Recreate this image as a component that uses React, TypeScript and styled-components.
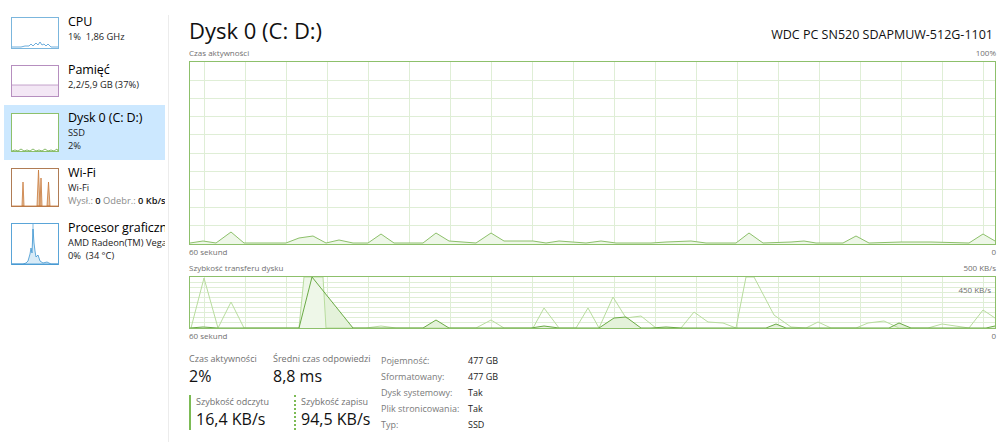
import { Fragment } from "react";
import styled, { createGlobalStyle } from "styled-components";

const GlobalStyle = createGlobalStyle`
  html, body {
    margin: 0;
    padding: 0;
    background: #ffffff;
  }
  body {
    font-family: "Open Sans", "Noto Sans", sans-serif;
    color: #000;
  }
`;

const GREEN = "#8dc06b";
const GRID = "#dfeed6";
const FILL = "#eef7e8";

type Pt = [number, number];

const Window = styled.div`
  display: flex;
  width: 1000px;
  height: 442px;
  overflow: hidden;
`;

/* ---------- left list of devices ---------- */

const Sidebar = styled.nav`
  width: 168px;
  flex-shrink: 0;
  padding-top: 9px;
  display: flex;
  flex-direction: column;
`;

const Item = styled.div<{ $active?: boolean }>`
  display: flex;
  gap: 9px;
  margin: 0 3px 0 4px;
  padding: 8px 0 8px 7px;
  background: ${(p) => (p.$active ? "#cce8ff" : "transparent")};
  overflow: hidden;
  white-space: nowrap;
`;

const Thumb = styled.svg<{ $h: number }>`
  flex-shrink: 0;
  width: 48px;
  height: ${(p) => p.$h}px;
  display: block;
`;

const ItemText = styled.div`
  display: flex;
  flex-direction: column;
  margin-top: -3px;
`;

const ItemTitle = styled.div`
  font-size: 12.5px;
  line-height: 16px;
  letter-spacing: -0.1px;
  color: #000;
`;

const ItemSub = styled.div`
  font-size: 9.3px;
  line-height: 13px;
  color: #222;
`;

const Dim = styled.span`
  color: #8a8a8a;
`;

const Strong = styled.span`
  color: #111;
  font-weight: 600;
`;

/* ---------- main panel ---------- */

const Main = styled.main`
  flex: 1;
  margin-top: 15px;
  border-left: 1px solid #ececec;
  padding: 0 4px 0 20px;
  display: flex;
  flex-direction: column;
  min-width: 0;
`;

const Header = styled.header`
  display: flex;
  justify-content: space-between;
  align-items: baseline;
  margin-top: 2px;
`;

const Title = styled.h1`
  margin: 0;
  font-size: 22px;
  line-height: 26px;
  font-weight: 400;
  color: #111;
`;

const Model = styled.div`
  font-size: 12.5px;
  color: #111;
  margin-right: 3px;
`;

const AxisRow = styled.div<{ $top: number }>`
  display: flex;
  justify-content: space-between;
  font-size: 8px;
  line-height: 12px;
  color: #707070;
  margin-top: ${(p) => p.$top}px;
`;

const ChartBox = styled.div<{ $h: number; $top: number }>`
  position: relative;
  height: ${(p) => p.$h}px;
  margin-top: ${(p) => p.$top}px;
  border: 1px solid ${GREEN};
  box-sizing: border-box;
`;

const ChartSvg = styled.svg`
  display: block;
  width: 100%;
  height: 100%;
`;

const InnerTag = styled.span`
  position: absolute;
  right: 4px;
  top: 7px;
  font-size: 8px;
  color: #707070;
`;

/* ---------- stats ---------- */

const Stats = styled.section`
  display: flex;
  margin-top: 10px;
  white-space: nowrap;
`;

const Perf = styled.div`
  width: 192px;
  display: flex;
  flex-direction: column;
  gap: 8px;
`;

const PerfRow = styled.div`
  display: flex;
`;

const Stat = styled.div<{ $w?: number; $bar?: "solid" | "dotted" }>`
  width: ${(p) => (p.$w ? `${p.$w}px` : "auto")};
  display: flex;
  flex-direction: column;
  padding-left: ${(p) => (p.$bar ? "5px" : "0")};
  border-left: ${(p) => (p.$bar ? `2px ${p.$bar} #7cbb55` : "none")};
`;

const StatLabel = styled.div`
  font-size: 9px;
  line-height: 13px;
  color: #707070;
`;

const StatValue = styled.div`
  font-size: 16px;
  line-height: 22px;
  color: #111;
`;

const Props = styled.div`
  display: grid;
  grid-template-columns: 87px auto;
  grid-auto-rows: 16px;
  align-items: center;
  font-size: 9px;
`;

const PropKey = styled.div`
  color: #7a7a7a;
`;

const PropVal = styled.div`
  color: #222;
`;

/* ---------- drawing helpers ---------- */

const pts = (list: Pt[]) => list.map(([x, y]) => `${x},${y}`).join(" ");

const area = (list: Pt[], bottom: number) =>
  pts([[list[0][0], bottom], ...list, [list[list.length - 1][0], bottom]]);

function Grid({ w, h, rows }: { w: number; h: number; rows: number }) {
  const cols: number[] = [];
  for (let x = 14; x < w; x += 41) cols.push(x);
  const lines: number[] = [];
  for (let i = 1; i < rows; i++) lines.push((h / rows) * i);
  return (
    <g stroke={GRID} strokeWidth={1} shapeRendering="crispEdges">
      {cols.map((x) => (
        <line key={`c${x}`} x1={x} y1={0} x2={x} y2={h} />
      ))}
      {lines.map((y) => (
        <line key={`r${y}`} x1={0} y1={y} x2={w} y2={y} />
      ))}
    </g>
  );
}

const activity: Pt[] = [
  [0, 181], [13, 179], [26, 181], [41, 170], [54, 181], [96, 181], [109, 176],
  [123, 174], [136, 181], [149, 178], [163, 181], [178, 181], [191, 172],
  [204, 181], [233, 181], [246, 171], [259, 179], [286, 181], [301, 171],
  [314, 179], [343, 179], [356, 181], [369, 179], [396, 181], [411, 179],
  [426, 181], [461, 181], [476, 180], [501, 179], [516, 181], [546, 181],
  [559, 171], [573, 181], [601, 180], [614, 179], [626, 181], [653, 181],
  [666, 174], [679, 181], [711, 180], [741, 180], [779, 181], [793, 172],
  [805, 179],
];

const readRate: Pt[] = [
  [0, 51], [13, 50], [28, 51], [109, 51], [122, 0], [163, 51], [233, 51],
  [246, 43], [259, 51], [341, 51], [354, 49], [369, 51], [409, 51], [424, 41],
  [436, 40], [451, 51], [461, 51], [476, 50], [491, 51], [576, 51], [586, 47],
  [596, 51], [699, 51], [709, 46], [721, 51], [796, 51], [805, 49],
];

const writeRate: Pt[] = [
  [1, 51], [14, 1], [28, 51], [41, 25], [54, 51], [109, 51], [114, 0],
  [133, 0], [136, 51], [176, 51], [191, 49], [206, 51], [286, 51], [301, 43],
  [314, 51], [343, 51], [354, 31], [369, 51], [386, 51], [398, 31], [409, 51],
  [423, 20], [436, 41], [451, 39], [466, 51], [491, 51], [504, 35], [518, 45],
  [533, 46], [546, 51], [556, 0], [564, 0], [584, 38], [601, 50], [616, 51],
  [628, 45], [641, 51], [666, 51], [678, 46], [694, 44], [709, 51], [738, 51],
  [752, 47], [779, 51], [793, 33], [805, 41],
];

function ActivityChart() {
  const w = 805;
  const h = 182;
  return (
    <ChartSvg viewBox={`0 0 ${w} ${h}`} preserveAspectRatio="none">
      <Grid w={w} h={h} rows={10} />
      <polygon points={area(activity, h)} fill={FILL} />
      <polyline points={pts(activity)} fill="none" stroke="#8dc06b" strokeWidth={1} />
    </ChartSvg>
  );
}

function TransferChart() {
  const w = 805;
  const h = 51;
  return (
    <ChartSvg viewBox={`0 0 ${w} ${h}`} preserveAspectRatio="none">
      <Grid w={w} h={h} rows={10} />
      <polygon points={area(readRate, h)} fill="#e4f2da" />
      <polygon points={pts([[109, 51], [114, 0], [133, 0], [136, 51]])} fill="#eef7e8" />
      <polyline points={pts(writeRate)} fill="none" stroke="#b8dc9e" strokeWidth={1} />
      <polyline points={pts(readRate)} fill="none" stroke="#6aaa45" strokeWidth={1} />
    </ChartSvg>
  );
}

/* ---------- sidebar thumbnails ---------- */

function CpuThumb() {
  return (
    <Thumb $h={32} viewBox="0 0 48 32">
      <rect x={0.5} y={0.5} width={47} height={31} fill="#fff" stroke="#7bb6dd" />
      <polyline
        points="1,30 10,30 14,29 18,29 20,27 22,29 25,26 27,28 29,25 31,28 33,27 35,29 37,27 40,30 47,30"
        fill="none"
        stroke="#4a9bd4"
        strokeWidth={0.8}
      />
    </Thumb>
  );
}

function MemThumb() {
  return (
    <Thumb $h={32} viewBox="0 0 48 32">
      <rect x={0.5} y={0.5} width={47} height={31} fill="#fff" stroke="#b68fbf" />
      <rect x={1} y={20} width={46} height={11} fill="#f3e7f5" />
      <line x1={1} y1={20} x2={47} y2={20} stroke="#b68fbf" strokeWidth={0.8} />
    </Thumb>
  );
}

function DiskThumb() {
  return (
    <Thumb $h={39} viewBox="0 0 48 39">
      <rect x={0.5} y={0.5} width={47} height={38} fill="#fff" stroke="#8dc06b" />
      <polyline
        points="1,38 4,37 7,38 10,36 13,38 16,37 19,38 22,36 25,38 28,37 31,38 34,36 37,38 40,37 43,38 46,36 47,38"
        fill="none"
        stroke="#6aaa45"
        strokeWidth={0.8}
      />
    </Thumb>
  );
}

function WifiThumb() {
  return (
    <Thumb $h={39} viewBox="0 0 48 39">
      <rect x={0.5} y={0.5} width={47} height={38} fill="#fff" stroke="#b07c55" />
      <g fill="#e8c6a6" stroke="#c8783a" strokeWidth={0.8}>
        <polygon points="11,38 12,14 13,38" />
        <polygon points="26,38 27.5,2 29,38" />
        <polygon points="29,38 30,10 31,38" />
        <polygon points="36,38 37.5,14 39,38" />
      </g>
      <line x1={1} y1={38} x2={47} y2={38} stroke="#c8783a" strokeWidth={0.8} />
    </Thumb>
  );
}

function GpuThumb() {
  return (
    <Thumb $h={42} viewBox="0 0 48 42">
      <rect x={0.5} y={0.5} width={47} height={41} fill="#fff" stroke="#5aa5d8" />
      <line x1={22} y1={1} x2={22} y2={41} stroke="#5aa5d8" strokeWidth={0.8} />
      <polygon
        points="1,41 12,41 15,40 17,38 19,31 20,25 21,30 22,6 23,20 24,28 25,34 27,32 29,38 32,40 36,39 40,41 47,41"
        fill="#d8ebf7"
        stroke="#3f95d0"
        strokeWidth={0.8}
      />
    </Thumb>
  );
}

const properties: [string, string][] = [
  ["Pojemność:", "477 GB"],
  ["Sformatowany:", "477 GB"],
  ["Dysk systemowy:", "Tak"],
  ["Plik stronicowania:", "Tak"],
  ["Typ:", "SSD"],
];

export default function App() {
  return (
    <>
      <GlobalStyle />
      <Window>
        <Sidebar>
          <Item>
            <CpuThumb />
            <ItemText>
              <ItemTitle>CPU</ItemTitle>
              <ItemSub>1%&nbsp; 1,86 GHz</ItemSub>
            </ItemText>
          </Item>
          <Item>
            <MemThumb />
            <ItemText>
              <ItemTitle>Pamięć</ItemTitle>
              <ItemSub>2,2/5,9 GB (37%)</ItemSub>
            </ItemText>
          </Item>
          <Item $active>
            <DiskThumb />
            <ItemText>
              <ItemTitle>Dysk 0 (C: D:)</ItemTitle>
              <ItemSub>SSD</ItemSub>
              <ItemSub>2%</ItemSub>
            </ItemText>
          </Item>
          <Item>
            <WifiThumb />
            <ItemText>
              <ItemTitle>Wi-Fi</ItemTitle>
              <ItemSub>Wi-Fi</ItemSub>
              <ItemSub>
                <Dim>Wysł.:</Dim> <Strong>0</Strong> <Dim>Odebr.:</Dim> <Strong>0 Kb/s</Strong>
              </ItemSub>
            </ItemText>
          </Item>
          <Item>
            <GpuThumb />
            <ItemText>
              <ItemTitle>Procesor graficzny</ItemTitle>
              <ItemSub>AMD Radeon(TM) Vega</ItemSub>
              <ItemSub>0%&nbsp; (34 °C)</ItemSub>
            </ItemText>
          </Item>
        </Sidebar>

        <Main>
          <Header>
            <Title>Dysk 0 (C: D:)</Title>
            <Model>WDC PC SN520 SDAPMUW-512G-1101</Model>
          </Header>

          <AxisRow $top={4}>
            <span>Czas aktywności</span>
            <span>100%</span>
          </AxisRow>
          <ChartBox $h={184} $top={2}>
            <ActivityChart />
          </ChartBox>
          <AxisRow $top={1}>
            <span>60 sekund</span>
            <span>0</span>
          </AxisRow>

          <AxisRow $top={4}>
            <span>Szybkość transferu dysku</span>
            <span>500 KB/s</span>
          </AxisRow>
          <ChartBox $h={53} $top={2}>
            <TransferChart />
            <InnerTag>450 KB/s</InnerTag>
          </ChartBox>
          <AxisRow $top={1}>
            <span>60 sekund</span>
            <span>0</span>
          </AxisRow>

          <Stats>
            <Perf>
              <PerfRow>
                <Stat $w={84}>
                  <StatLabel>Czas aktywności</StatLabel>
                  <StatValue>2%</StatValue>
                </Stat>
                <Stat>
                  <StatLabel>Średni czas odpowiedzi</StatLabel>
                  <StatValue>8,8 ms</StatValue>
                </Stat>
              </PerfRow>
              <PerfRow>
                <Stat $w={98} $bar="solid">
                  <StatLabel>Szybkość odczytu</StatLabel>
                  <StatValue>16,4 KB/s</StatValue>
                </Stat>
                <Stat $bar="dotted">
                  <StatLabel>Szybkość zapisu</StatLabel>
                  <StatValue>94,5 KB/s</StatValue>
                </Stat>
              </PerfRow>
            </Perf>
            <Props>
              {properties.map(([k, v]) => (
                <Fragment key={k}>
                  <PropKey>{k}</PropKey>
                  <PropVal>{v}</PropVal>
                </Fragment>
              ))}
            </Props>
          </Stats>
        </Main>
      </Window>
    </>
  );
}
